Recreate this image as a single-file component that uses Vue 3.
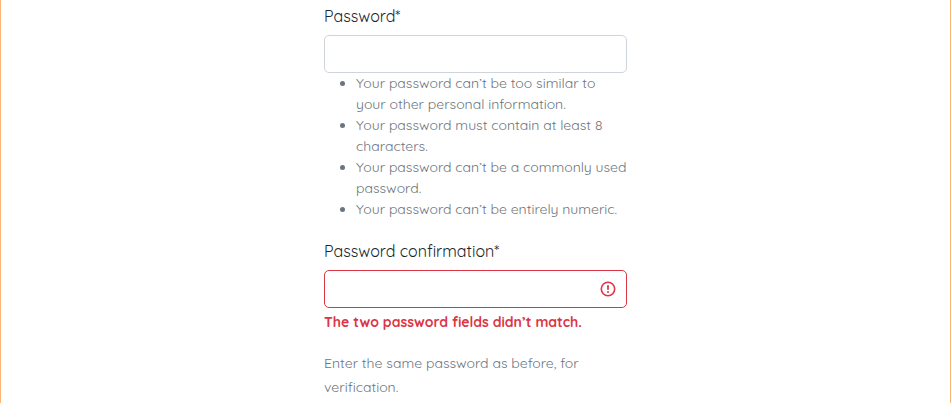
<script setup>
const rules = [
  ['Your password can’t be too similar to', 'your other personal information.'],
  ['Your password must contain at least 8', 'characters.'],
  ['Your password can’t be a commonly used', 'password.'],
  ['Your password can’t be entirely numeric.'],
]
</script>

<template>
  <main class="page">
    <form class="form">
      <label class="label" for="p1"><span class="l1">Password*</span></label>
      <input id="p1" class="input" type="password" />
      <ul class="rules">
        <li v-for="(r, i) in rules" :key="i">
          <span v-for="(t, j) in r" :key="j" class="line" :class="`r${i}${j}`">{{ t }}</span>
        </li>
      </ul>
      <label class="label second" for="p2"><span class="l2">Password confirmation*</span></label>
      <div class="field">
        <input id="p2" class="input invalid" type="password" />
        <svg class="icon" viewBox="0 0 16 16" fill="none" stroke="#dc3545">
          <circle cx="8" cy="8" r="6.7" stroke-width="1.6" />
          <path d="M8 4.2v4.5" stroke-width="1.8" />
          <circle cx="8" cy="11" r="1" fill="#dc3545" stroke="none" />
        </svg>
      </div>
      <strong class="error"><span class="e">The two password fields didn’t match.</span></strong>
      <p class="help"><span class="line h0">Enter the same password as before, for</span><span class="line h1">verification.</span></p>
    </form>
  </main>
</template>

<style>
body { background: #fff; }
</style>

<style scoped>
.page { box-sizing: border-box; height: 403px; overflow: hidden; border: solid #fcb573; border-width: 0 1px; font-family: Quicksand, Lato, sans-serif; color: #212529; }
.form { width: 303px; margin-left: 323px; padding-top: 4px; }
.label { display: block; height: 24px; line-height: 24px; font-size: 16px; margin-bottom: 7px; white-space: nowrap; }
.input { display: block; box-sizing: border-box; width: 303px; height: 38px; border: 1px solid #ced4da; border-radius: 5px; background: #fff; outline: none; }
.invalid { border-color: #dc3545; }
.rules { margin: 0 0 19px; padding-left: 32px; font-size: 14px; line-height: 21px; color: #6c757d; }
.line { display: block; white-space: nowrap; }
.field { display: grid; grid-template-columns: 1fr; align-items: center; }
.field > * { grid-area: 1 / 1; }
.icon { justify-self: end; width: 16px; height: 16px; margin-right: 11px; }
.error { display: block; margin-top: 4px; font-size: 14px; line-height: 21px; color: #dc3545; white-space: nowrap; }
.help { margin: 18px 0 0; font-size: 14px; line-height: 24px; color: #6c757d; }
</style>
